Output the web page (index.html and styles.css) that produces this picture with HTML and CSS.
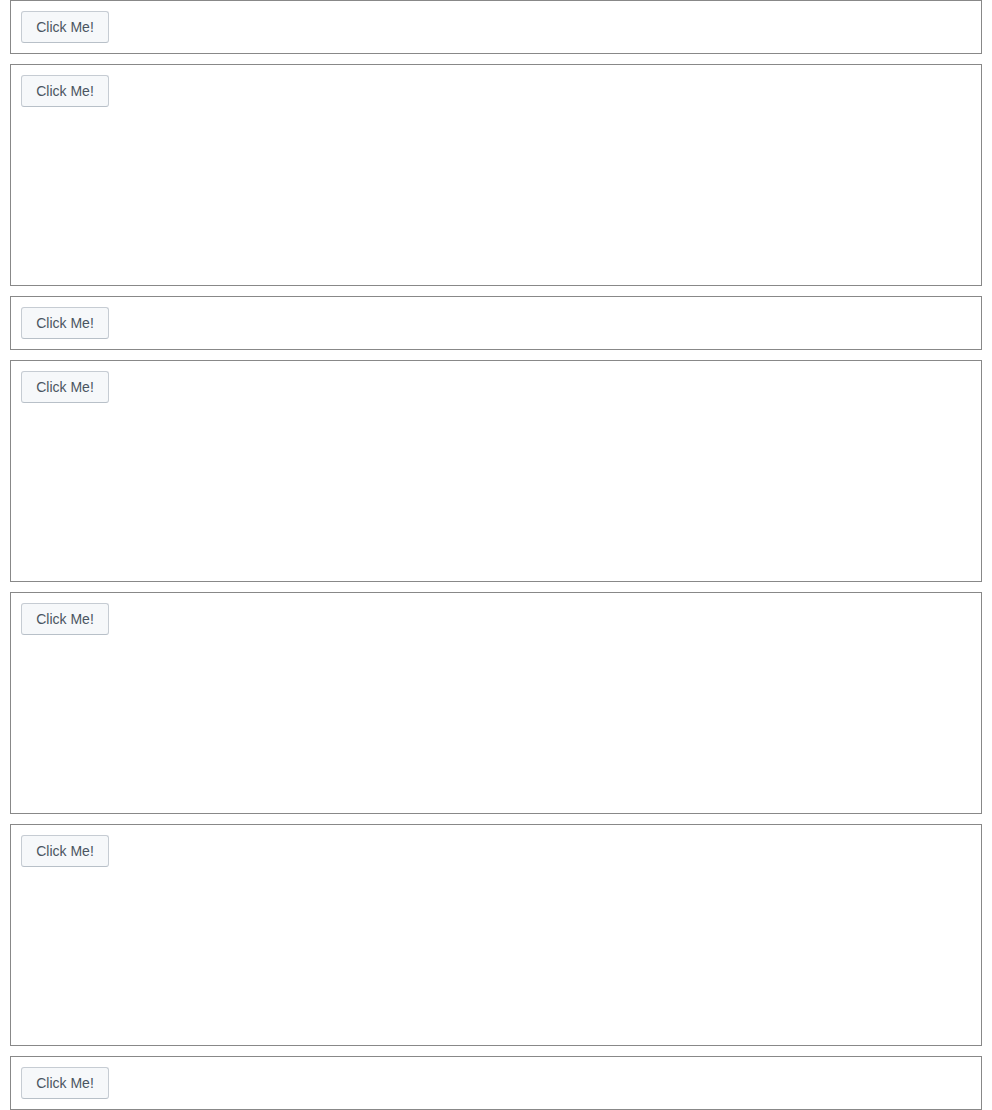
FILE: index.html
```html
<!DOCTYPE html>
<html>
<head>
<meta charset="utf-8">
<link rel="stylesheet" href="styles.css">
</head>
<body>
<div class="list">
  <div class="box"><button class="btn">Click Me!</button></div>
  <div class="box tall"><button class="btn">Click Me!</button></div>
  <div class="box"><button class="btn">Click Me!</button></div>
  <div class="box tall"><button class="btn">Click Me!</button></div>
  <div class="box tall"><button class="btn">Click Me!</button></div>
  <div class="box tall"><button class="btn">Click Me!</button></div>
  <div class="box"><button class="btn">Click Me!</button></div>
</div>
</body>
</html>
```
FILE: styles.css
```css
html, body {
  margin: 0;
  padding: 0;
  background: #fff;
  font-family: "Liberation Sans", Arial, sans-serif;
}
.list {
  display: flex;
  flex-direction: column;
  gap: 10px;
  padding: 0 10px;
}
.box {
  border: 1px solid #888;
  padding: 10px;
  height: 32px;
  display: flex;
  align-items: flex-start;
}
.box.tall {
  height: 200px;
}
.btn {
  box-sizing: border-box;
  height: 32px;
  width: 88px;
  padding: 0 14px;
  font-family: "Liberation Sans", Arial, sans-serif;
  font-size: 14px;
  line-height: 30px;
  color: #4a5561;
  background: #f6f8fa;
  border: 1px solid #c6ccd3;
  border-bottom-color: #b8c0c8;
  border-radius: 3px;
  text-align: center;
}
```
